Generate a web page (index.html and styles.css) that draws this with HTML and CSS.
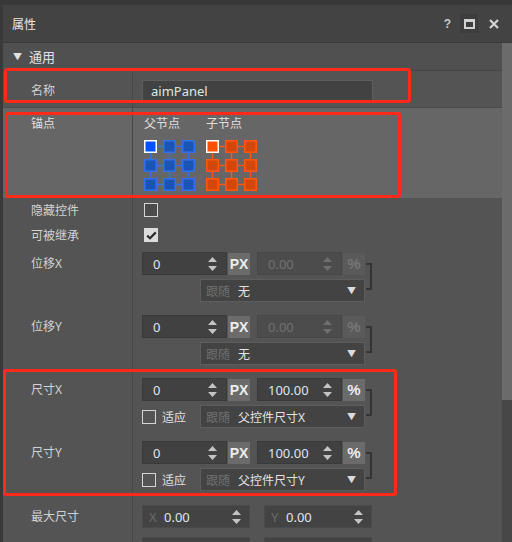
FILE: index.html
```html
<!DOCTYPE html>
<html>
<head>
<meta charset="utf-8">
<link rel="stylesheet" href="styles.css">
</head>
<body>
<div class="topstrip"></div>
<div class="win">
  <div class="edge"></div>
  <div class="main">
    <div class="titlebar">
      <span class="title">属性</span>
      <div class="tools">
        <span class="help">?</span>
        <span class="maxbtn"><span class="maxicon"></span></span>
        <svg class="close" width="10" height="10" viewBox="0 0 10 10"><path d="M1 1L9 9M9 1L1 9" stroke="#d2d2d2" stroke-width="2.2"/></svg>
      </div>
    </div>
    <div class="body">
      <div class="content">
        <div class="section"><span class="tri">▼</span><span>通用</span></div>

        <div class="row r-name">
          <div class="label">名称</div>
          <div class="value"><div class="text-input">aimPanel</div></div>
        </div>

        <div class="row r-anchor">
          <div class="label">锚点</div>
          <div class="value anchors">
            <div class="acol">
              <div class="ahead">父节点</div>
              <svg width="52" height="52" viewBox="0 0 52 52">
                <g stroke="#3371ea" stroke-width="1.5">
                  <path d="M12 6.5H19M31 6.5H38M12 25.5H19M31 25.5H38M12 44.5H19M31 44.5H38M6.5 12V19M6.5 31V38M25.5 12V19M25.5 31V38M44.5 12V19M44.5 31V38"/>
                  <g fill="#1a55b6">
                    <rect x="19.75" y="0.75" width="11.5" height="11.5"/>
                    <rect x="38.75" y="0.75" width="11.5" height="11.5"/>
                    <rect x="0.75" y="19.75" width="11.5" height="11.5"/>
                    <rect x="19.75" y="19.75" width="11.5" height="11.5"/>
                    <rect x="38.75" y="19.75" width="11.5" height="11.5"/>
                    <rect x="0.75" y="38.75" width="11.5" height="11.5"/>
                    <rect x="19.75" y="38.75" width="11.5" height="11.5"/>
                    <rect x="38.75" y="38.75" width="11.5" height="11.5"/>
                  </g>
                  <rect x="0.75" y="0.75" width="11.5" height="11.5" fill="#0052ff" stroke="#ffffff"/>
                </g>
              </svg>
            </div>
            <div class="acol">
              <div class="ahead">子节点</div>
              <svg width="52" height="52" viewBox="0 0 52 52">
                <g stroke="#ff5614" stroke-width="1.5">
                  <path d="M12 6.5H19M31 6.5H38M12 25.5H19M31 25.5H38M12 44.5H19M31 44.5H38M6.5 12V19M6.5 31V38M25.5 12V19M25.5 31V38M44.5 12V19M44.5 31V38"/>
                  <g fill="#d2480c">
                    <rect x="19.75" y="0.75" width="11.5" height="11.5"/>
                    <rect x="38.75" y="0.75" width="11.5" height="11.5"/>
                    <rect x="0.75" y="19.75" width="11.5" height="11.5"/>
                    <rect x="19.75" y="19.75" width="11.5" height="11.5"/>
                    <rect x="38.75" y="19.75" width="11.5" height="11.5"/>
                    <rect x="0.75" y="38.75" width="11.5" height="11.5"/>
                    <rect x="19.75" y="38.75" width="11.5" height="11.5"/>
                    <rect x="38.75" y="38.75" width="11.5" height="11.5"/>
                  </g>
                  <rect x="0.75" y="0.75" width="11.5" height="11.5" fill="#ff5000" stroke="#ffffff"/>
                </g>
              </svg>
            </div>
          </div>
        </div>

        <div class="row r-check">
          <div class="label">隐藏控件</div>
          <div class="value cbwrap"><span class="cb"></span></div>
        </div>
        <div class="row r-check">
          <div class="label">可被继承</div>
          <div class="value cbwrap"><span class="cb on"><svg width="11" height="9" viewBox="0 0 11 9"><path d="M1.2 4.6L4 7.2L9.8 1.4" fill="none" stroke="#2d2d2d" stroke-width="2.2"/></svg></span></div>
        </div>

        <div class="row r-ctl">
          <div class="label">位移X</div>
          <div class="value">
            <div class="ctl">
              <div class="line1">
                <div class="num"><span class="v">0</span><svg class="spin" width="9" height="14" viewBox="0 0 9 14"><path d="M4.5 0L9 5H0Z M0 9H9L4.5 14Z"/></svg></div>
                <div class="unit">PX</div>
                <div class="num dis"><span class="v">0.00</span><svg class="spin" width="9" height="14" viewBox="0 0 9 14"><path d="M4.5 0L9 5H0Z M0 9H9L4.5 14Z"/></svg></div>
                <div class="unit pct dis">%</div>
              </div>
              <div class="bracket"></div>
              <div class="line2">
                <div class="select"><span class="follow">跟随</span><span class="sv">无</span><span class="arrow">▼</span></div>
              </div>
            </div>
          </div>
        </div>

        <div class="row r-ctl">
          <div class="label">位移Y</div>
          <div class="value">
            <div class="ctl">
              <div class="line1">
                <div class="num"><span class="v">0</span><svg class="spin" width="9" height="14" viewBox="0 0 9 14"><path d="M4.5 0L9 5H0Z M0 9H9L4.5 14Z"/></svg></div>
                <div class="unit">PX</div>
                <div class="num dis"><span class="v">0.00</span><svg class="spin" width="9" height="14" viewBox="0 0 9 14"><path d="M4.5 0L9 5H0Z M0 9H9L4.5 14Z"/></svg></div>
                <div class="unit pct dis">%</div>
              </div>
              <div class="bracket"></div>
              <div class="line2">
                <div class="select"><span class="follow">跟随</span><span class="sv">无</span><span class="arrow">▼</span></div>
              </div>
            </div>
          </div>
        </div>

        <div class="row r-ctl">
          <div class="label">尺寸X</div>
          <div class="value">
            <div class="ctl">
              <div class="line1">
                <div class="num"><span class="v">0</span><svg class="spin" width="9" height="14" viewBox="0 0 9 14"><path d="M4.5 0L9 5H0Z M0 9H9L4.5 14Z"/></svg></div>
                <div class="unit">PX</div>
                <div class="num"><span class="v">100.00</span><svg class="spin" width="9" height="14" viewBox="0 0 9 14"><path d="M4.5 0L9 5H0Z M0 9H9L4.5 14Z"/></svg></div>
                <div class="unit pct">%</div>
              </div>
              <div class="bracket"></div>
              <div class="line2">
                <span class="cb small"></span><span class="fit">适应</span>
                <div class="select"><span class="follow">跟随</span><span class="sv">父控件尺寸X</span><span class="arrow">▼</span></div>
              </div>
            </div>
          </div>
        </div>

        <div class="row r-ctl">
          <div class="label">尺寸Y</div>
          <div class="value">
            <div class="ctl">
              <div class="line1">
                <div class="num"><span class="v">0</span><svg class="spin" width="9" height="14" viewBox="0 0 9 14"><path d="M4.5 0L9 5H0Z M0 9H9L4.5 14Z"/></svg></div>
                <div class="unit">PX</div>
                <div class="num"><span class="v">100.00</span><svg class="spin" width="9" height="14" viewBox="0 0 9 14"><path d="M4.5 0L9 5H0Z M0 9H9L4.5 14Z"/></svg></div>
                <div class="unit pct">%</div>
              </div>
              <div class="bracket"></div>
              <div class="line2">
                <span class="cb small"></span><span class="fit">适应</span>
                <div class="select"><span class="follow">跟随</span><span class="sv">父控件尺寸Y</span><span class="arrow">▼</span></div>
              </div>
            </div>
          </div>
        </div>

        <div class="row r-xy">
          <div class="label">最大尺寸</div>
          <div class="value xy">
            <div class="xyin"><span class="ax">X</span><span class="v">0.00</span><svg class="spin" width="9" height="14" viewBox="0 0 9 14"><path d="M4.5 0L9 5H0Z M0 9H9L4.5 14Z"/></svg></div>
            <div class="xyin"><span class="ax">Y</span><span class="v">0.00</span><svg class="spin" width="9" height="14" viewBox="0 0 9 14"><path d="M4.5 0L9 5H0Z M0 9H9L4.5 14Z"/></svg></div>
          </div>
        </div>

        <div class="row r-xy">
          <div class="label">最小尺寸</div>
          <div class="value xy">
            <div class="xyin"><span class="ax">X</span><span class="v">0.00</span><svg class="spin" width="9" height="14" viewBox="0 0 9 14"><path d="M4.5 0L9 5H0Z M0 9H9L4.5 14Z"/></svg></div>
            <div class="xyin"><span class="ax">Y</span><span class="v">0.00</span><svg class="spin" width="9" height="14" viewBox="0 0 9 14"><path d="M4.5 0L9 5H0Z M0 9H9L4.5 14Z"/></svg></div>
          </div>
        </div>
      </div>
      <div class="scrollbar"><div class="thumb"></div></div>
    </div>
  </div>
</div>

<div class="mark m1"></div>
<div class="mark m2"></div>
<div class="mark m3"></div>
</body>
</html>
```

FILE: styles.css
```css
html, body {
  margin: 0;
  padding: 0;
}
body {
  width: 512px;
  height: 542px;
  overflow: hidden;
  position: relative;
  background: #545454;
  font-family: "Noto Sans", "Noto Sans CJK SC", sans-serif;
  font-size: 12px;
  color: #d4d4d4;
}
.topstrip {
  height: 5px;
  background: #383838;
}
.win {
  display: flex;
  height: 537px;
}
.edge {
  width: 3px;
  background: #393939;
  flex: none;
}
.main {
  flex: 1;
  display: flex;
  flex-direction: column;
  min-width: 0;
}
.titlebar {
  height: 37px;
  flex: none;
  background: #434343;
  border-bottom: 1px solid #3a3a3a;
  display: flex;
  align-items: center;
  padding-left: 9px;
}
.title {
  color: #eaeaea;
  font-size: 12px;
}
.tools {
  margin-left: auto;
  display: flex;
  align-items: center;
  padding-right: 13px;
}
.help {
  color: #c8c8c8;
  font-weight: bold;
  font-size: 12px;
  font-family: "Liberation Sans", sans-serif;
  margin-right: 9px;
}
.maxbtn {
  width: 18px;
  height: 19px;
  background: #3d3d3d;
  display: flex;
  align-items: center;
  justify-content: center;
  margin-right: 11px;
}
.maxicon {
  width: 7px;
  height: 5px;
  border: 2px solid #d2d2d2;
  border-top-width: 3px;
}
.close {
  display: block;
}
.body {
  flex: 1;
  display: flex;
  min-height: 0;
}
.content {
  flex: 1;
  background: #545454;
  overflow: hidden;
}
.scrollbar {
  width: 10px;
  flex: none;
  background: #474747;
}
.thumb {
  height: 357px;
  background: #6b6b6b;
}
.section {
  height: 27px;
  background: #505050;
  border-bottom: 1px solid #464646;
  display: flex;
  align-items: center;
  padding-left: 10px;
  color: #e2e2e2;
  font-size: 13px;
}
.tri {
  font-size: 9px;
  width: 16px;
  color: #e2e2e2;
}
.row {
  display: flex;
}
.label {
  width: 130px;
  box-sizing: border-box;
  flex: none;
  padding-left: 28px;
  border-right: 1px solid #474747;
  color: #d2d2d2;
}
.value {
  flex: 1;
  padding-left: 9px;
}
.r-name {
  height: 36px;
}
.r-name .label {
  padding-top: 9px;
  line-height: 22px;
}
.r-name .value {
  padding-top: 9px;
}
.text-input {
  width: 231px;
  height: 22px;
  line-height: 20px;
  box-sizing: border-box;
  background: #424242;
  border: 1px solid #5e5e5e;
  padding-left: 8px;
  color: #dfe4ea;
  font-size: 13px;
}
.r-anchor {
  height: 90px;
  border-top: 1px solid #4b4b4b;
  background: #666666;
}
.r-anchor .label {
  padding-top: 5px;
  line-height: 22px;
  color: #e0e0e0;
}
.anchors {
  display: flex;
  padding-left: 11px;
  padding-top: 5px;
}
.acol {
  width: 62px;
}
.ahead {
  line-height: 22px;
  color: #e0e0e0;
  margin-bottom: 5px;
}
.acol svg {
  display: block;
}
.r-check {
  height: 25px;
}
.r-check .label {
  line-height: 25px;
}
.cbwrap {
  padding-left: 11px;
  padding-top: 5px;
}
.cb {
  display: flex;
  align-items: center;
  justify-content: center;
  width: 12px;
  height: 12px;
  border: 1px solid #d6d6d6;
  background: #4b4b4b;
}
.cb.on {
  background: #dcdcdc;
  border-color: #dcdcdc;
}
.cb.small {
  background: transparent;
  flex: none;
}
.r-ctl {
  height: 63px;
}
.r-ctl .label {
  padding-top: 4px;
  line-height: 23px;
}
.r-ctl .value {
  padding-top: 4px;
}
.ctl {
  display: grid;
  grid-template-columns: 223px 7px;
  grid-template-rows: 23px 23px;
  row-gap: 4px;
  width: 230px;
}
.line1 {
  grid-column: 1;
  grid-row: 1;
  display: flex;
  align-items: center;
}
.line2 {
  grid-column: 1;
  grid-row: 2;
  display: flex;
  align-items: center;
}
.bracket {
  grid-column: 2;
  grid-row: 1 / 3;
  margin: 11px 0 12px 1px;
  border: 2px solid #343434;
  border-left: none;
}
.num {
  width: 85px;
  height: 23px;
  box-sizing: border-box;
  background: #414141;
  border: 1px solid #3a3a3a;
  display: flex;
  align-items: center;
  padding-left: 10px;
  padding-right: 9px;
  color: #dde5ef;
  font-size: 13px;
}
.num .v {
  flex: 1;
}
.spin {
  display: block;
  fill: #c4c4c4;
}
.num.dis {
  background: #4c4c4c;
  border-color: #474747;
  color: #707070;
  width: 85px;
}
.num.dis .spin {
  fill: #6e6e6e;
}
.line1 .num:nth-child(3) {
  margin-left: 7px;
}
.unit {
  width: 22px;
  height: 22px;
  margin-left: 1px;
  background: #6b6b6b;
  color: #ededed;
  font-weight: bold;
  font-family: "Liberation Sans", sans-serif;
  font-size: 14px;
  display: flex;
  align-items: center;
  justify-content: center;
  flex: none;
}
.unit.pct {
  font-size: 15px;
}
.unit.dis {
  background: #5a5a5a;
  color: #767676;
}
.select {
  margin-left: auto;
  width: 165px;
  height: 23px;
  box-sizing: border-box;
  background: #434343;
  border: 1px solid #5d5d5d;
  display: flex;
  align-items: center;
  padding-left: 5px;
  padding-right: 8px;
  font-size: 12px;
}
.follow {
  color: #6f6f6f;
  margin-right: 8px;
}
.sv {
  color: #e2e2e2;
  flex: 1;
}
.arrow {
  color: #dcdcdc;
  font-size: 9px;
}
.fit {
  margin-left: 6px;
  color: #e0e0e0;
}
.r-xy {
  height: 32px;
}
.r-xy .label {
  padding-top: 5px;
  line-height: 23px;
}
.xy {
  display: flex;
  padding-top: 5px;
  gap: 14px;
}
.xyin {
  width: 108px;
  height: 23px;
  box-sizing: border-box;
  background: #434343;
  border: 1px solid #4a4a4a;
  display: flex;
  align-items: center;
  padding-left: 6px;
  padding-right: 8px;
  font-size: 13px;
  color: #dde5ef;
}
.ax {
  color: #6a6a6a;
  width: 15px;
}
.xyin .v {
  flex: 1;
}
.mark {
  position: absolute;
  border: 3px solid #ff2a1a;
  border-radius: 3px;
  box-sizing: border-box;
}
.m1 {
  left: 4px;
  top: 68px;
  width: 407px;
  height: 35px;
}
.m2 {
  left: 5px;
  top: 112px;
  width: 396px;
  height: 86px;
}
.m3 {
  left: 3px;
  top: 369px;
  width: 394px;
  height: 127px;
}
```
